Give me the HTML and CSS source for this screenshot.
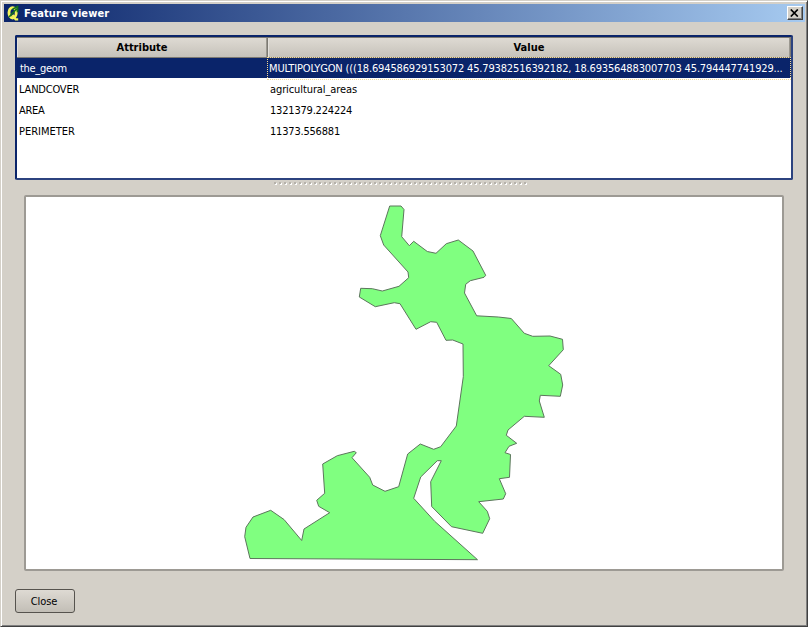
FILE: index.html
```
<!DOCTYPE html>
<html lang="en">
<head>
<meta charset="utf-8">
<title>Feature viewer</title>
<link rel="stylesheet" href="styles.css">
</head>
<body>
<div class="window">
  <header class="titlebar">
    <svg class="logo" width="16" height="16" viewBox="0 0 16 16">
      <ellipse cx="7.6" cy="7.8" rx="3.6" ry="5.2" fill="none" stroke="#f4f45c" stroke-width="2.9"/>
      <path d="M7.5 10l3.2 4.4h2.5" fill="none" stroke="#f4f45c" stroke-width="2.4"/>
      <path d="M4 12L11.5 4M7.5 4.2L12.5 1.6v5.6" fill="none" stroke="#16751c" stroke-width="1.7"/>
    </svg>
    <h1 class="title">Feature viewer</h1>
    <button class="close-x" aria-label="Close window">
      <svg width="9" height="8" viewBox="0 0 9 8"><path d="M.8 .5l7 7M7.8 .5l-7 7" stroke="#000" stroke-width="1.7"/></svg>
    </button>
  </header>
  <main class="content">
    <div class="table">
      <div class="row head"><div class="cell">Attribute</div><div class="cell">Value</div></div>
      <div class="row selected"><div class="cell">the_geom</div><div class="cell geom">MULTIPOLYGON (((18.694586929153072 45.79382516392182, 18.693564883007703 45.794447741929...</div></div>
      <div class="row"><div class="cell landcover">LANDCOVER</div><div class="cell areas">agricultural_areas</div></div>
      <div class="row"><div class="cell">AREA</div><div class="cell number">1321379.224224</div></div>
      <div class="row"><div class="cell perimeter">PERIMETER</div><div class="cell number">11373.556881</div></div>
    </div>
    <div class="splitter"></div>
    <div class="map">
      <svg width="756" height="372" viewBox="26 197 756 372">
        <polygon class="shape" points="389.7,206 401,206 404,209.5 401.7,236.7 409.3,245.7 413.7,241.3 427.3,251.5 436,253.3 446.3,243.7 458.3,240 473,251 485.7,275.3 484,277.3 470.3,280.7 465.7,284.3 464.5,293 476.7,315.8 498.3,317 511.3,318.5 524.3,333.3 532.7,336.3 550,336 562.5,339.3 563.3,349.7 548.7,365.7 560.7,374.3 562.7,385 560.3,396.3 540.3,395.3 539.3,401 544.3,417.3 524.3,416.3 508,430 506.3,435.3 516.7,443.3 509,446.3 505,452.7 510.5,454.5 509.5,477.3 499.3,478.7 505.7,493.7 503.3,499 478.7,501.7 487.3,511.3 489.7,518.7 482.7,533.3 451.5,526.7 431.7,506.5 430.7,481.7 441.3,460.7 437.3,460.7 420.7,477 413.7,498.3 434.7,521.3 477.5,559.7 250,558.5 244.7,536.7 246,527.3 253,517 270.7,510.3 284,519.5 301.7,540.5 304,529 329.7,512.7 318.7,506.3 316.7,500.3 324.7,493.3 322.7,464 337.3,455.7 354.3,451.3 356.3,452.7 352,457.7 369.7,477.3 372.7,485 385,491.3 398.7,486.7 407.7,454 420.3,444 433.7,449.3 440.7,446.7 456.3,426 463.3,376.7 463,344 452.7,340 446,340.3 436.7,322.3 430.7,321.7 416,329.3 400,303.7 394.3,302.7 375.3,306.7 359.3,297 360.7,288.3 372.3,288.7 382.3,291 399,286.3 408.7,277.7 408,272 383.7,245 380.3,235.7"/>
      </svg>
    </div>
    <button class="close">Close</button>
  </main>
</div>
</body>
</html>
```
FILE: styles.css
```
* { box-sizing: border-box; }
body {
  margin: 0;
  font-family: "DejaVu Sans Condensed", "DejaVu Sans", sans-serif;
  font-size: 11px;
  color: #000;
}
.window {
  width: 808px;
  height: 627px;
  padding: 2px;
  background: #d4d0c8;
  border: 1px solid;
  border-color: #d4d0c8 #404040 #404040 #d4d0c8;
  box-shadow: inset 1px 1px #fff, inset -1px -1px #808080;
}
.titlebar {
  display: flex;
  align-items: center;
  height: 18px;
  margin: 1px 0 0 1px;
  padding: 0 2px 0 1px;
  background: linear-gradient(90deg, #0a246a, #a6caf0);
}
.logo { flex: none; }
.title {
  flex: 1;
  margin: 0 0 0 3px;
  font-size: 11px;
  font-weight: bold;
  letter-spacing: 0.1px;
  color: #fff;
}
.close-x {
  display: flex;
  align-items: center;
  justify-content: center;
  width: 16px;
  height: 14px;
  padding: 0 1px 1px 0;
  background: #d4d0c8;
  border: 1px solid;
  border-color: #fff #404040 #404040 #fff;
  box-shadow: inset -1px -1px #808080;
}
.content { padding: 13px 11px 0 12px; }
.table {
  width: 778px;
  height: 145px;
  background: #fff;
  border: 2px solid #2c437f;
  border-top-color: #0a246a;
  border-left-color: #0a246a;
  border-radius: 2px;
}
.row {
  display: grid;
  grid-template-columns: 250px 1fr;
  height: 21px;
}
.cell {
  min-width: 0;
  padding-left: 2px;
  line-height: 23px;
  letter-spacing: -0.3px;
  white-space: nowrap;
}
.head {
  grid-template-columns: 251px 1fr;
  height: 20px;
}
.head .cell {
  padding: 0;
  line-height: 19px;
  font-weight: bold;
  letter-spacing: 0;
  text-align: center;
  background: linear-gradient(#dedad3, #c6c2ba);
  border: solid #7c7972;
  border-width: 1px 1px 1px 0;
  box-shadow: inset 1px 0 #e4e1dc, inset -1px 0 #9b9890;
}
.selected { background: #0a246a; color: #fff; }
.selected .cell:first-child { padding-left: 3px; }
.selected .geom {
  padding-left: 1px;
  line-height: 21px;
  letter-spacing: -0.155px;
  border: 1px dotted #f5db95;
}
.landcover { letter-spacing: -0.2px; }
.perimeter { letter-spacing: 0; }
.areas { letter-spacing: -0.1px; padding-left: 3px; }
.number { padding-left: 3px; letter-spacing: -0.2px; }
.splitter {
  width: 254px;
  height: 3px;
  margin: 2px 0 0 259px;
  background: url("data:image/svg+xml,%3Csvg xmlns='http://www.w3.org/2000/svg' width='5' height='3'%3E%3Cpath fill='%23fff' d='M1 1h2v2H1z'/%3E%3Cpath fill='%23b5b1aa' d='M0 0h2v2H0z'/%3E%3C/svg%3E");
}
.map {
  width: 760px;
  height: 376px;
  margin: 10px 0 0 9px;
  background: #fff;
  border: 2px solid #9d9a94;
  border-radius: 2px;
}
.map svg { display: block; }
.shape { fill: #80ff80; stroke: #5c765c; stroke-width: 1; stroke-linejoin: round; }
.close {
  display: block;
  width: 60px;
  height: 24px;
  margin-top: 18px;
  padding: 0 2px 0 0;
  font: inherit;
  letter-spacing: -0.1px;
  color: #000;
  background: linear-gradient(#dedad3, #c2beb6);
  border: 1px solid #56534e;
  border-radius: 3px;
}
```
